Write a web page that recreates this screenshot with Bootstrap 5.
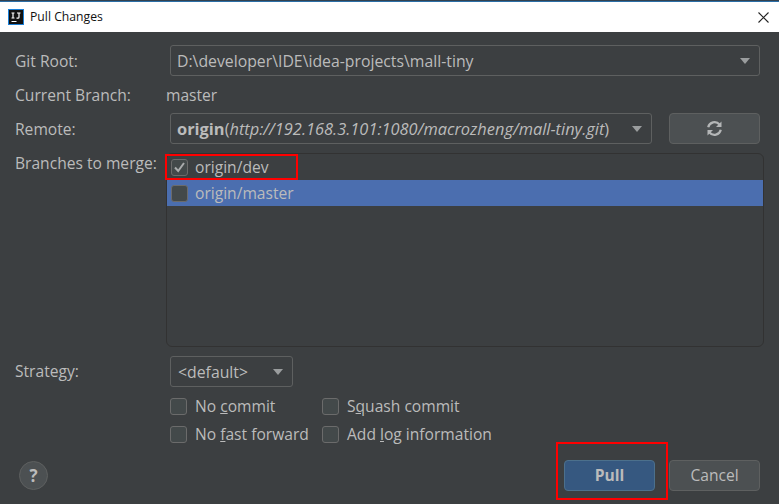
<!DOCTYPE html>
<html lang="en">
<head>
<meta charset="utf-8">
<title>Pull Changes</title>
<link href="https://cdn.jsdelivr.net/npm/bootstrap@5.3.0/dist/css/bootstrap.min.css" rel="stylesheet">
<style>
html,body{height:504px;overflow:hidden}
body{background:#3c3f41;color:#bbb;font-family:"Open Sans","Noto Sans",sans-serif;font-size:15.6px;line-height:20px}
.topline{height:2px;background:linear-gradient(#33414f 50%,#2b6ea6 50%)}
.titlebar{height:30px;background:#fff;color:#111;font-size:12.2px;padding-left:8px;padding-right:10px}
.appicon{width:16px;height:16px;margin-right:6px;flex:none}
.pane{height:472px;padding:13px 19px 14px 15px;position:relative}
.lbl{width:155px;flex:none}
.curlbl{width:151px;flex:none}
.combo{height:31px;border:1px solid #5e6060;border-radius:3px;padding:1px 9px 0 6px;background:#3c3f41;flex:none}
.rootcombo{width:590px;font-size:15.8px}
.remotecombo{width:482px}
.remotetext{font-size:16.4px}
.stratcombo{width:123px;padding-left:7px;font-size:15.8px}
.caret{width:0;height:0;border-left:5.500px solid transparent;border-right:5.500px solid transparent;border-top:6px solid #9a9d9e;flex:none}
.currow{height:37px;padding-top:1px}
.syncbtn{width:91px;height:31px;margin-left:17px;padding:0}
.idebtn{width:91px;height:31px;padding:0;background:#4c5052;border:1px solid #5e6060;border-radius:4px;color:#bbb;font-size:15.6px;line-height:1}
.idebtn.pullbtn{background:#365880;border-color:#4c708c;font-weight:700}
.branchrow{margin-top:9px}
.branchlbl{width:151px;flex:none}
.branchlist{width:598px;height:194px;border:1px solid #323232;flex:none}
.branchitem{height:26px;padding-left:4px;background:transparent;border:0;color:#bbb;border-radius:0}
.branchitem.sel{background:#4b6eaf}
.form-check-input.idecheck{width:17px;height:17px;margin:0 8px 0 0;background-color:#43494a;border:1px solid #6b6b6b;border-radius:3px;flex:none;float:none}
.branchitem .form-check-input.idecheck{margin-right:7px}
.form-check-input.idecheck:checked{background-color:#43494a;border-color:#6b6b6b;background-image:url("data:image/svg+xml,%3csvg xmlns='http://www.w3.org/2000/svg' viewBox='0 0 17 17'%3e%3cpath fill='none' stroke='%23a9abac' stroke-width='2' d='M4 8.500l3.200 3.500L13 4'/%3e%3c/svg%3e");background-size:17px 17px}
.strategyrow{margin-top:9px}
.strategyrow .lbl{padding-bottom:2px}
.optgrid{margin-top:11px;padding-left:155px;display:grid;grid-template-columns:152px auto;row-gap:11px;justify-content:start}
.optitem{height:17px;white-space:nowrap}
.optitem span{padding-bottom:2px}
.footrow{margin-top:17px;height:31px}
.helpbtn{width:29px;height:29px;border-radius:50%;background:#4c5052;border:1px solid #5e6060;color:#bbb;font-weight:700;font-size:17px;margin-left:4px;padding:0;line-height:1}
.redbox{position:absolute;border:2px solid #f00;pointer-events:none}
.redone{left:165px;top:122px;width:133px;height:26px}
.redtwo{left:556px;top:410px;width:112px;height:58px}
.gapbtn{gap:14px}
</style>
</head>
<body>
<div class="topline"></div>
<div class="titlebar d-flex align-items-center">
  <svg class="appicon" viewBox="0 0 16 16"><rect width="16" height="16" fill="#1b7fd6"/><rect x="1" y="1" width="14" height="14" fill="#111"/><path d="M3.500 4h3M5 4v5M3.500 9h3M9 4h3.500M11 4v4.200q0 1-1 1H8.500M3.500 12.500h5" fill="none" stroke="#fff" stroke-width="1.200"/></svg>
  <span>Pull Changes</span>
  <svg class="ms-auto" width="11" height="11" viewBox="0 0 11 11"><path d="M.5.5l10 10M10.500.5l-10 10" stroke="#222" stroke-width="1.100"/></svg>
</div>
<main class="pane">
  <div class="d-flex align-items-center">
    <div class="lbl">Git Root:</div>
    <div class="combo rootcombo d-flex align-items-center justify-content-between"><span>D:\developer\IDE\idea-projects\mall-tiny</span><span class="caret"></span></div>
  </div>
  <div class="d-flex align-items-center currow">
    <div class="curlbl">Current Branch:</div>
    <div>master</div>
  </div>
  <div class="d-flex align-items-center">
    <div class="lbl">Remote:</div>
    <div class="combo remotecombo d-flex align-items-center justify-content-between text-nowrap overflow-hidden"><span class="remotetext"><b>origin</b>(<i>http://192.168.3.101:1080/macrozheng/mall-tiny.git</i>)</span><span class="caret"></span></div>
    <button type="button" class="idebtn syncbtn d-flex align-items-center justify-content-center" aria-label="Refresh"><svg width="17" height="17" viewBox="0 0 17 17" fill="none" stroke="#b4b6b7" stroke-width="2.200"><path d="M2.200 7.200A6.500 6.500 0 0 1 13.500 4.500"/><path d="M14.800 9.800A6.500 6.500 0 0 1 3.500 12.500"/><path d="M15.500 1.500V7H10" fill="#b4b6b7" stroke="none"/><path d="M1.500 15.500V10H7" fill="#b4b6b7" stroke="none"/></svg></button>
  </div>
  <div class="d-flex branchrow">
    <div class="branchlbl">Branches to merge:</div>
    <div class="branchlist list-group">
      <label class="branchitem d-flex align-items-center"><input class="form-check-input idecheck" type="checkbox" checked>origin/dev</label>
      <label class="branchitem sel d-flex align-items-center"><input class="form-check-input idecheck" type="checkbox">origin/master</label>
    </div>
  </div>
  <div class="d-flex align-items-center strategyrow">
    <div class="lbl">Strategy:</div>
    <div class="combo stratcombo d-flex align-items-center justify-content-between"><span>&lt;default&gt;</span><span class="caret"></span></div>
  </div>
  <div class="optgrid">
    <label class="optitem d-flex align-items-center"><input class="form-check-input idecheck" type="checkbox"><span>No <u>c</u>ommit</span></label>
    <label class="optitem d-flex align-items-center"><input class="form-check-input idecheck" type="checkbox"><span>S<u>q</u>uash commit</span></label>
    <label class="optitem d-flex align-items-center"><input class="form-check-input idecheck" type="checkbox"><span>No <u>f</u>ast forward</span></label>
    <label class="optitem d-flex align-items-center"><input class="form-check-input idecheck" type="checkbox"><span>Add <u>l</u>og information</span></label>
  </div>
  <div class="d-flex align-items-center footrow">
    <button type="button" class="helpbtn">?</button>
    <div class="ms-auto d-flex gapbtn">
      <button type="button" class="idebtn pullbtn">Pull</button>
      <button type="button" class="idebtn">Cancel</button>
    </div>
  </div>
  <div class="redbox redone"></div>
  <div class="redbox redtwo"></div>
</main>
</body>
</html>
